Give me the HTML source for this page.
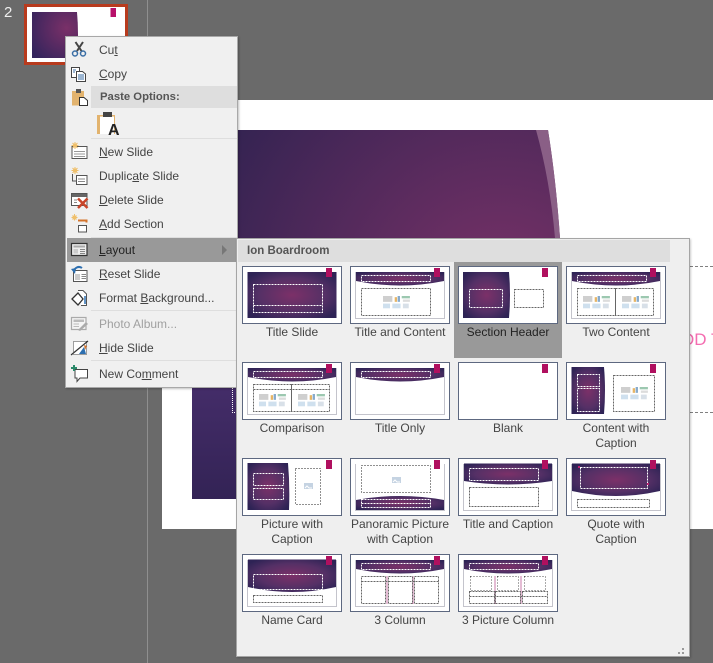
<!DOCTYPE html>
<html><head><meta charset="utf-8"><style>
html,body{margin:0;padding:0}
body{width:713px;height:663px;position:relative;overflow:hidden;background:#6a6a6a;font-family:"Liberation Sans",sans-serif;color:#444}
div,svg{position:absolute}
.mi{left:99px;font-size:12px;line-height:16px;white-space:nowrap;color:#444}
.sep{left:91px;width:146px;height:1px;background:#dedede}
.th{width:100px;height:58px;display:block}
.th rect,.th g{shape-rendering:crispEdges}
.lb{width:108px;text-align:center;font-size:12px;line-height:15px;color:#444}
.ic{left:70px;width:20px;height:20px}
</style></head><body>
<div style="left:147px;top:0;width:1px;height:663px;background:#8f8f8f"></div>
<div style="left:4px;top:4px;font-size:15px;line-height:18px;color:#eee">2</div>
<div style="left:24px;top:4px;width:98px;height:55px;border:3px solid #b83b1e;background:#fff"></div>
<svg style="left:24px;top:4px" width="104" height="61"><defs><radialGradient id="sg" cx=".75" cy=".35" r=".9"><stop offset="0" stop-color="#7a3068"/><stop offset="1" stop-color="#33245c"/></radialGradient></defs><path d="M8 8H53Q55 30 53 54H8Z" fill="url(#sg)"/><rect x="86.500" y="4" width="5.500" height="9" fill="#b8106a"/></svg>

<div style="left:162px;top:100px;width:551px;height:429px;background:#fff"></div>
<svg style="left:162px;top:100px" width="551" height="429"><defs><radialGradient id="bg" gradientUnits="userSpaceOnUse" cx="340" cy="200" r="340"><stop offset="0" stop-color="#7a3268"/><stop offset="1" stop-color="#2f2250"/></radialGradient><linearGradient id="lf" x1="0" y1="0" x2="0" y2="1"><stop offset="0" stop-color="#452d6a"/><stop offset="1" stop-color="#332355"/></linearGradient></defs>
<path d="M30 30H386Q394 80 398 138V399H30Z" fill="url(#bg)"/><path d="M374 30H386Q394 80 398 138H393Q388 80 374 30Z" fill="#8a5f86"/>
<rect x="30" y="280" width="48" height="119" fill="url(#lf)"/>
<path d="M70.500 288V312.500H74" fill="none" stroke="#fff" stroke-dasharray="1 1" shape-rendering="crispEdges"/>
<path d="M528 166.500H551M528 312.500H551" stroke="#808080" stroke-dasharray="3 2" fill="none" shape-rendering="crispEdges"/>
<text x="520" y="245" font-size="17" fill="#f46cb0" font-family="Liberation Sans">DD T</text></svg>

<div style="left:65px;top:36px;width:171px;height:350px;background:#f0f0f0;border:1px solid #a8a8a8;box-shadow:1px 1px 2px rgba(0,0,0,.25)"></div>
<div style="left:91px;top:86px;width:146px;height:22px;background:#dedede"></div>
<div class="sep" style="top:138px"></div><div class="sep" style="top:237px"></div><div class="sep" style="top:310px"></div><div class="sep" style="top:360px"></div>
<div style="left:67px;top:238px;width:169px;height:24px;background:#999"></div>
<svg style="left:222px;top:245px" width="6" height="10"><path d="M0 0L5 5L0 10Z" fill="#777"/></svg>

<div class="mi" style="top:42px">Cu<u>t</u></div>
<div class="mi" style="top:66px"><u>C</u>opy</div>
<div class="mi" style="top:89px;left:100px;font-weight:bold;font-size:11.300px;color:#555">Paste Options:</div>
<div class="mi" style="top:144px"><u>N</u>ew Slide</div>
<div class="mi" style="top:168px">Duplic<u>a</u>te Slide</div>
<div class="mi" style="top:192px"><u>D</u>elete Slide</div>
<div class="mi" style="top:216px"><u>A</u>dd Section</div>
<div class="mi" style="top:242px;color:#222"><u>L</u>ayout</div>
<div class="mi" style="top:266px"><u>R</u>eset Slide</div>
<div class="mi" style="top:290px">Format <u>B</u>ackground...</div>
<div class="mi" style="top:316px;color:#a0a0a0">Photo Album...</div>
<div class="mi" style="top:340px"><u>H</u>ide Slide</div>
<div class="mi" style="top:366px">New Co<u>m</u>ment</div>

<!-- Cut -->
<svg class="ic" style="top:40px" viewBox="0 0 20 20"><path d="M5.500 2L11.500 11M13 2L7 11" stroke="#444" stroke-width="2" fill="none"/><circle cx="5" cy="13.500" r="2.500" fill="none" stroke="#3a6ea5" stroke-width="1.500"/><circle cx="13" cy="13.500" r="2.500" fill="none" stroke="#3a6ea5" stroke-width="1.500"/></svg>
<!-- Copy -->
<svg class="ic" style="top:64px" viewBox="0 0 20 20"><path d="M1.500 3.500H9.500V13.500H1.500Z" fill="#fff" stroke="#444"/><path d="M6.500 7.500H12.500L15.500 10V17.500H6.500Z" fill="#fff" stroke="#444"/><path d="M8 11H14M8 13H14M8 15H14M3 6H6M3 8H5" stroke="#3a6ea5"/></svg>
<!-- Paste -->
<svg class="ic" style="top:88px;left:71px" viewBox="0 0 20 20"><path d="M1 3H13V17.500H1Z" fill="#e2b36e"/><path d="M5 1H10V5H5Z" fill="#555"/><path d="M8.500 9.500H13L16.500 12.500V17.500H8.500Z" fill="#fff" stroke="#333"/></svg>
<svg style="left:96px;top:111px" width="24" height="26" viewBox="0 0 24 26"><path d="M1 4H19V23H1Z" fill="#e2b36e"/><path d="M4 5.500H18V23H4Z" fill="#fff"/><path d="M7 1H16V6H7Z" fill="#444"/><text x="12" y="24" font-size="16" font-weight="bold" fill="#222" font-family="Liberation Sans">A</text></svg>
<!-- New Slide -->
<svg class="ic" style="top:142px" viewBox="0 0 20 20"><path d="M2 4.500H17V16.500H2Z" fill="#fff" stroke="#555"/><path d="M4 9.500H15M4 12H15M4 14.500H15" stroke="#999"/><path d="M5 0V7M1.500 3.500H8.500M2.500 1L7.500 6M7.500 1L2.500 6" stroke="#efbf6a"/><circle cx="5" cy="3.500" r="2" fill="#efbf6a"/></svg>
<!-- Duplicate -->
<svg class="ic" style="top:166px" viewBox="0 0 20 20"><path d="M2.500 8V15H6" fill="none" stroke="#555"/><path d="M6.500 9.500H17V18.500H6.500Z" fill="#fff" stroke="#555"/><path d="M8 13H15M8 15.500H15" stroke="#888"/><path d="M5 1V8M1.500 4.500H8.500M2.500 2L7.500 7M7.500 2L2.500 7" stroke="#efbf6a"/><circle cx="5" cy="4.500" r="2" fill="#efbf6a"/></svg>
<!-- Delete -->
<svg class="ic" style="top:190px" viewBox="0 0 20 20"><path d="M1.500 3.500H17V15.500H1.500Z" fill="#fff" stroke="#555"/><path d="M2 4H16.500V7H2Z" fill="#666"/><path d="M4 10H7M4 12.500H7" stroke="#888"/><path d="M8 8.500L17.500 18M17.500 8.500L8 18" stroke="#c8452a" stroke-width="2.500"/></svg>
<!-- Add Section -->
<svg class="ic" style="top:214px" viewBox="0 0 20 20"><path d="M8 6.500H16.500V8.500" fill="none" stroke="#d4742c" stroke-width="2"/><path d="M8.500 11.500H16.500V18H8.500Z" fill="#fff" stroke="#555"/><path d="M4.500 0V6.500M1.500 3.500H7.500M2.500 1.500L6.500 5.500M6.500 1.500L2.500 5.500" stroke="#efbf6a"/><circle cx="4.500" cy="3.500" r="2" fill="#efbf6a"/></svg>
<!-- Layout -->
<svg class="ic" style="top:240px" viewBox="0 0 20 20"><path d="M1.500 3.500H17V15.500H1.500Z" fill="#eee" stroke="#333" stroke-width="1.200"/><path d="M3.500 5.500H15V7.500H3.500Z" fill="#aaa"/><path d="M3.500 9H8V13.500H3.500Z" fill="#ccc"/><path d="M10 9.500H15M10 11.500H15M10 13.500H15" stroke="#888"/></svg>
<!-- Reset -->
<svg class="ic" style="top:264px" viewBox="0 0 20 20"><path d="M3.500 6.500H17V17.500H3.500Z" fill="#fff" stroke="#555"/><path d="M5 10H10V16H5Z" fill="#ccc"/><path d="M11.500 10.500H16M11.500 12.500H16M11.500 14.500H16" stroke="#888"/><path d="M4 8A5 5 0 0 1 12 4" fill="none" stroke="#2d6fb0" stroke-width="2"/><path d="M1 5L6 4L5 10Z" fill="#2d6fb0"/></svg>
<!-- Format BG -->
<svg class="ic" style="top:288px" viewBox="0 0 20 20"><path d="M8 2.500H13L16.500 6V17.500H11" fill="#fff" stroke="#555"/><path d="M2 11L8 5L13 11L8 17Z" fill="#fff" stroke="#333" stroke-width="1.300"/><path d="M15 8V16" stroke="#2d6fb0" stroke-width="1.500"/></svg>
<!-- Photo Album -->
<svg class="ic" style="top:314px" viewBox="0 0 20 20"><path d="M1.500 3.500H16V15.500H1.500Z" fill="#f4f4f4" stroke="#aaa" stroke-width="1.200"/><path d="M3.500 5.500H14V8H3.500Z" fill="#bbb"/><path d="M3.500 10H9M3.500 12.500H9" stroke="#bbb"/><path d="M8 16L16 8L18 10L10 17Z" fill="#aaa"/></svg>
<!-- Hide -->
<svg class="ic" style="top:338px" viewBox="0 0 20 20"><path d="M3.500 3.500H16.500V16.500H3.500Z" fill="#fff" stroke="#444" stroke-dasharray="1 1"/><path d="M1 17L18 3" stroke="#333" stroke-width="1.200"/><path d="M9 16L14 9L16 16Z" fill="#2d6fb0"/><path d="M14 7L17 8L15 12Z" fill="#d4742c"/></svg>
<!-- Comment -->
<svg class="ic" style="top:364px" viewBox="0 0 20 20"><path d="M5 5.500H17.500V14H10L7 17.500V14H5Z" fill="#fff" stroke="#444"/><path d="M1 4H7M4 1V7" stroke="#2b8a6a" stroke-width="2"/></svg>

<!-- Layout gallery -->
<div style="left:236px;top:238px;width:452px;height:417px;background:#efefef;border:1px solid #a5a5a5;box-shadow:1px 1px 2px rgba(0,0,0,.2)"></div>
<div style="left:238px;top:240px;width:432px;height:22px;background:#dedede"></div>
<div style="left:247px;top:244px;font-size:11.500px;line-height:15px;font-weight:bold;color:#555">Ion Boardroom</div>
<div style="left:454px;top:262px;width:108px;height:96px;background:#999"></div>

<svg width="0" height="0" style="left:0;top:0"><defs>
<radialGradient id="g" cx=".5" cy=".5" r=".62"><stop offset="0" stop-color="#7c3068"/><stop offset=".6" stop-color="#553066"/><stop offset="1" stop-color="#2e2355"/></radialGradient>
<symbol id="fr" viewBox="0 0 100 58"><rect x=".5" y=".5" width="99" height="57" fill="#fff" stroke="#5d6880" shape-rendering="crispEdges"/></symbol>
<symbol id="tag" viewBox="0 0 100 58"><rect x="84" y="2" width="6" height="9" fill="#b0105f" shape-rendering="crispEdges"/></symbol>
<symbol id="side" viewBox="0 0 100 58"><path d="M5.500 6V52.500H94.500V6" fill="none" stroke="#c4c4cc" shape-rendering="crispEdges"/></symbol>
<symbol id="band" viewBox="0 0 100 58"><path d="M6 6H94V15Q50 24 6 15Z" fill="url(#g)"/></symbol>
<symbol id="t" viewBox="0 0 100 58"><rect x="11.500" y="9.500" width="69" height="6" fill="none" stroke="#fff" stroke-dasharray="2 1" shape-rendering="crispEdges"/></symbol>
<g id="ci"><g transform="scale(1.170)"><rect x="0" y="0" width="8" height="5" fill="#cfcfcf"/><rect x="10" y="1" width="2" height="4" fill="#e6b566"/><rect x="12.500" y="0" width="2" height="5" fill="#86aacb"/><rect x="16" y="0" width="7" height="2" fill="#9cc8b0"/><rect x="17" y="3" width="6" height="2" fill="#dcdcdc"/><rect x="0" y="6.500" width="6" height="4" fill="#cfe0ee"/><rect x="8" y="6.500" width="7" height="4" fill="#cfe0ee"/><rect x="17" y="6.500" width="5" height="4" fill="#d8e0e8"/></g></g>
<g id="pi"><rect x="0" y="0" width="9" height="6" fill="#c5d3e2"/><path d="M1 5L3 3L5 5H8" stroke="#fff" fill="none"/></g>
</defs></svg>

<!-- Row 1 -->
<svg class="th" style="left:242px;top:266px" viewBox="0 0 100 58"><use href="#fr"/><rect x="5.500" y="6" width="89" height="46" fill="url(#g)"/><g fill="none" stroke="#fff" stroke-dasharray="2 1"><rect x="11.500" y="18.500" width="69" height="28"/><path d="M11.500 39.500H80.500"/></g><use href="#tag"/></svg>
<svg class="th" style="left:350px;top:266px" viewBox="0 0 100 58"><use href="#fr"/><use href="#side"/><use href="#band"/><use href="#t"/><rect x="11.500" y="22.500" width="69" height="27" fill="none" stroke="#666" stroke-dasharray="2 1"/><use href="#ci" x="33" y="30"/><use href="#tag"/></svg>
<svg class="th" style="left:458px;top:266px" viewBox="0 0 100 58"><use href="#fr"/><path d="M5 6H51Q53 29 51 52H5Z" fill="url(#g)"/><rect x="11.500" y="23.500" width="33" height="18" fill="none" stroke="#fff" stroke-dasharray="2 1"/><rect x="56.500" y="23.500" width="29" height="18" fill="none" stroke="#666" stroke-dasharray="2 1"/><use href="#tag"/></svg>
<svg class="th" style="left:566px;top:266px" viewBox="0 0 100 58"><use href="#fr"/><use href="#side"/><use href="#band"/><use href="#t"/><g fill="none" stroke="#666" stroke-dasharray="2 1"><rect x="11.500" y="22.500" width="38" height="27"/><rect x="49.500" y="22.500" width="38" height="27"/></g><use href="#ci" x="17" y="30"/><use href="#ci" x="56" y="30"/><use href="#tag"/></svg>
<!-- Row 2 -->
<svg class="th" style="left:242px;top:362px" viewBox="0 0 100 58"><use href="#fr"/><use href="#side"/><use href="#band"/><use href="#t"/><g fill="none" stroke="#666" stroke-dasharray="2 1"><rect x="11.500" y="22.500" width="38" height="27"/><rect x="49.500" y="22.500" width="38" height="27"/><path d="M11.500 27.500H87.500"/></g><use href="#ci" x="17" y="32"/><use href="#ci" x="56" y="32"/><use href="#tag"/></svg>
<svg class="th" style="left:350px;top:362px" viewBox="0 0 100 58"><use href="#fr"/><use href="#side"/><use href="#band"/><use href="#t"/><use href="#tag"/></svg>
<svg class="th" style="left:458px;top:362px" viewBox="0 0 100 58"><use href="#fr"/><use href="#tag"/></svg>
<svg class="th" style="left:566px;top:362px" viewBox="0 0 100 58"><use href="#fr"/><path d="M5.500 5H38Q40 28 38 52H5.500Z" fill="url(#g)"/><g fill="none" stroke="#fff" stroke-dasharray="2 1"><rect x="11.500" y="12.500" width="22" height="12"/><rect x="11.500" y="26.500" width="22" height="23"/></g><rect x="47.500" y="13.500" width="41" height="36" fill="none" stroke="#666" stroke-dasharray="2 1"/><use href="#ci" x="55" y="25"/><use href="#tag"/></svg>
<!-- Row 3 -->
<svg class="th" style="left:242px;top:458px" viewBox="0 0 100 58"><use href="#fr"/><path d="M5.500 5H46Q48 28 47 52H5.500Z" fill="url(#g)"/><g fill="none" stroke="#fff" stroke-dasharray="2 1"><rect x="11.500" y="15.500" width="30" height="12"/><rect x="11.500" y="30.500" width="30" height="11"/></g><rect x="53.500" y="10.500" width="25" height="36" fill="none" stroke="#222" stroke-dasharray="1 2"/><use href="#pi" x="62" y="25"/><use href="#tag"/></svg>
<svg class="th" style="left:350px;top:458px" viewBox="0 0 100 58"><use href="#fr"/><use href="#side"/><path d="M6 52H94V42Q50 34 6 42Z" fill="url(#g)"/><rect x="11.500" y="7.500" width="69" height="27" fill="none" stroke="#222" stroke-dasharray="1 2"/><use href="#pi" x="42" y="19"/><g fill="none" stroke="#fff" stroke-dasharray="2 1"><rect x="11.500" y="41.500" width="69" height="8"/><path d="M11.500 45.500H80.500"/></g><use href="#tag"/></svg>
<svg class="th" style="left:458px;top:458px" viewBox="0 0 100 58"><use href="#fr"/><use href="#side"/><path d="M6 5.500H94V23Q50 30 6 23Z" fill="url(#g)"/><rect x="11.500" y="10.500" width="69" height="12" fill="none" stroke="#fff" stroke-dasharray="2 1"/><rect x="11.500" y="29.500" width="69" height="19" fill="none" stroke="#666" stroke-dasharray="2 1"/><use href="#tag"/></svg>
<svg class="th" style="left:566px;top:458px" viewBox="0 0 100 58"><use href="#fr"/><use href="#side"/><path d="M6 5.500H94V33Q50 43 6 33Z" fill="url(#g)"/><rect x="14.500" y="9.500" width="67" height="21" fill="none" stroke="#fff" stroke-dasharray="2 1"/><rect x="11.500" y="41.500" width="72" height="8" fill="none" stroke="#666" stroke-dasharray="2 1"/><rect x="12" y="8" width="2" height="2" fill="#c0206f"/><rect x="81" y="25" width="2" height="2" fill="#c0206f"/><use href="#tag"/></svg>
<!-- Row 4 -->
<svg class="th" style="left:242px;top:554px" viewBox="0 0 100 58"><use href="#fr"/><use href="#side"/><path d="M6 5.500H94V33Q50 43 6 33Z" fill="url(#g)"/><rect x="11.500" y="20.500" width="69" height="15" fill="none" stroke="#fff" stroke-dasharray="2 1"/><rect x="11.500" y="41.500" width="69" height="7" fill="none" stroke="#666" stroke-dasharray="2 1"/><use href="#tag"/></svg>
<svg class="th" style="left:350px;top:554px" viewBox="0 0 100 58"><use href="#fr"/><use href="#side"/><use href="#band"/><use href="#t"/><path d="M37 22V50M63 22V50" stroke="#c878a8" shape-rendering="crispEdges"/><g fill="none" stroke="#666" stroke-dasharray="2 1"><rect x="11.500" y="22.500" width="24" height="27"/><rect x="38.500" y="22.500" width="24" height="27"/><rect x="64.500" y="22.500" width="24" height="27"/><path d="M11.500 27.500H88.500"/></g><use href="#tag"/></svg>
<svg class="th" style="left:458px;top:554px" viewBox="0 0 100 58"><use href="#fr"/><use href="#side"/><use href="#band"/><use href="#t"/><path d="M37 22V50M63 22V50" stroke="#c878a8" shape-rendering="crispEdges"/><g fill="none" stroke="#555" stroke-dasharray="1 2"><rect x="12.500" y="22.500" width="21" height="14"/><rect x="39.500" y="22.500" width="21" height="14"/><rect x="66.500" y="22.500" width="21" height="14"/></g><g fill="none" stroke="#666" stroke-dasharray="2 1"><rect x="11.500" y="37.500" width="25" height="12"/><rect x="37.500" y="37.500" width="25" height="12"/><rect x="64.500" y="37.500" width="25" height="12"/><path d="M11.500 42.500H89.500"/></g><use href="#tag"/></svg>

<div class="lb" style="left:238px;top:325px">Title Slide</div>
<div class="lb" style="left:346px;top:325px">Title and Content</div>
<div class="lb" style="left:454px;top:325px;color:#222">Section Header</div>
<div class="lb" style="left:562px;top:325px">Two Content</div>
<div class="lb" style="left:238px;top:421px">Comparison</div>
<div class="lb" style="left:346px;top:421px">Title Only</div>
<div class="lb" style="left:454px;top:421px">Blank</div>
<div class="lb" style="left:562px;top:421px">Content with<br>Caption</div>
<div class="lb" style="left:238px;top:517px">Picture with<br>Caption</div>
<div class="lb" style="left:346px;top:517px">Panoramic Picture<br>with Caption</div>
<div class="lb" style="left:454px;top:517px">Title and Caption</div>
<div class="lb" style="left:562px;top:517px">Quote with<br>Caption</div>
<div class="lb" style="left:238px;top:613px">Name Card</div>
<div class="lb" style="left:346px;top:613px">3 Column</div>
<div class="lb" style="left:454px;top:613px">3 Picture Column</div>
<svg style="left:677px;top:648px" width="8" height="8"><path d="M5 0h2v2h-2zM1 4h2v2h-2zM5 4h2v2h-2z" fill="#999"/></svg>
</body></html>
